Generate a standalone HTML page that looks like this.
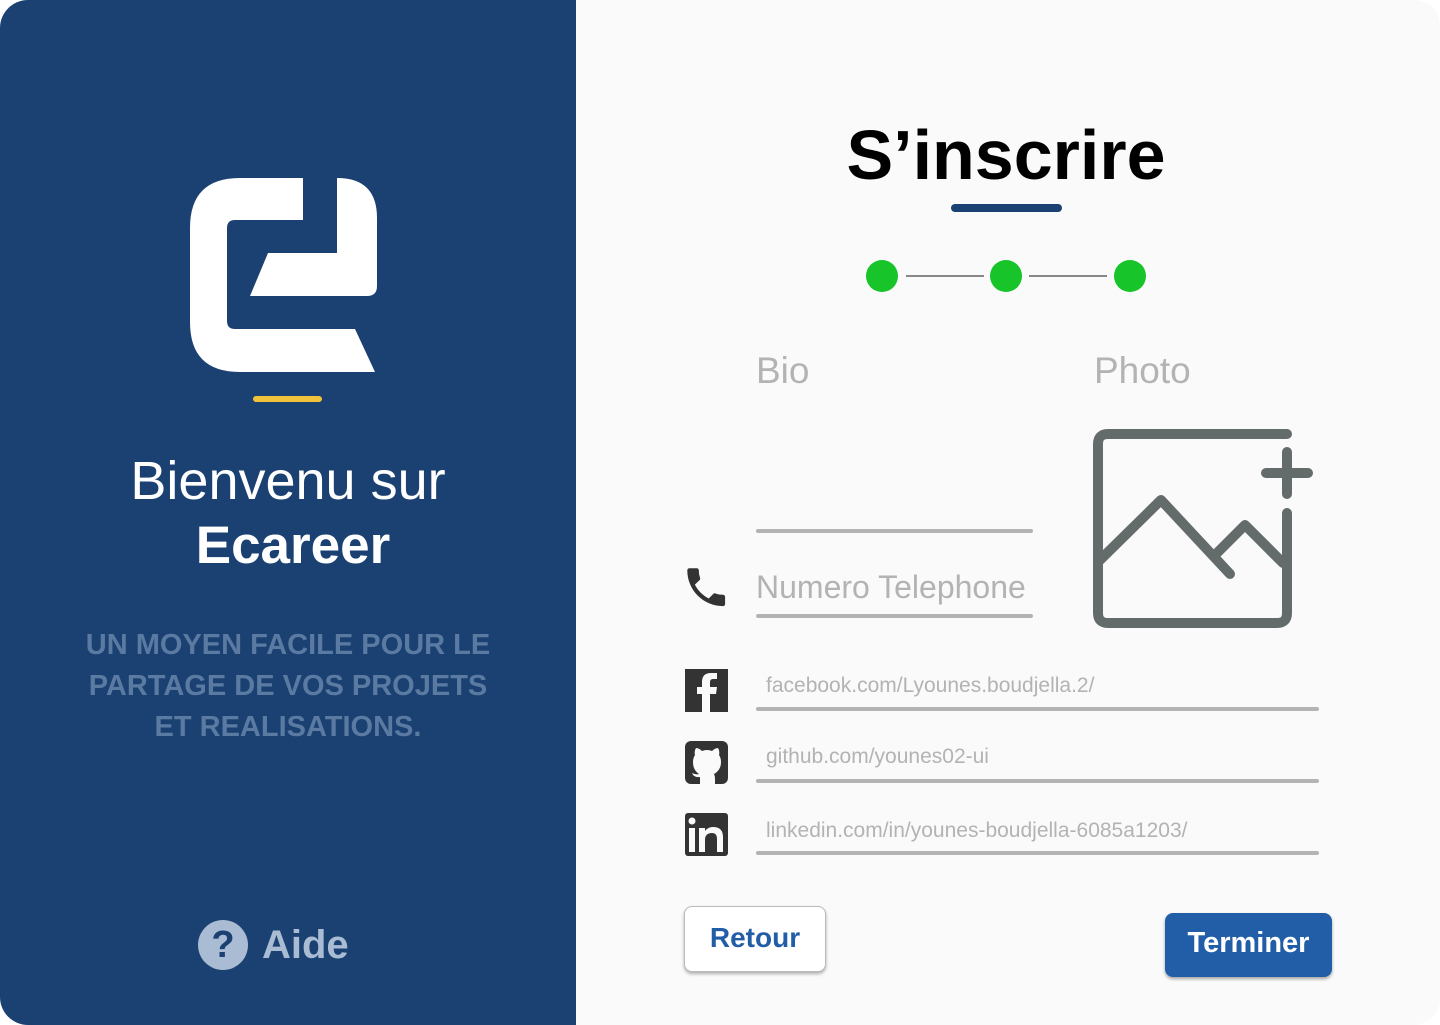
<!DOCTYPE html>
<html><head><meta charset="utf-8"><style>
*{margin:0;padding:0;box-sizing:border-box}
html,body{width:1440px;height:1025px;background:#fff;overflow:hidden;font-family:"Liberation Sans",sans-serif}
.left{position:absolute;left:0;top:0;width:576px;height:1025px;background:#1a4172;border-radius:28px 0 0 28px}
.right{position:absolute;left:576px;top:0;width:864px;height:1025px;background:#fafafa;border-radius:0 26px 26px 0}
.abs{position:absolute}
.c{text-align:center}
.line{position:absolute;height:4px;background:#b3b3b3;border-radius:2px}
.ph{position:absolute;color:#b3b3b3;font-size:21px;white-space:nowrap}
</style></head><body>
<div class="left">
<svg class="abs" style="left:0;top:0" width="576" height="420">
<path fill="#fff" d="M303,178 L303,220 L235,220 Q227,220 227,228 L227,321 Q227,329 235,329 L355,329 L375,372 L240,372 Q190,372 190,322 L190,228 Q190,178 240,178 Z"/>
<path fill="#fff" d="M337,178 Q377,178 377,218 L377,286 Q377,296 367,296 L250,296 L268,253 L337,253 Z"/>
<rect x="253" y="396" width="69" height="6" rx="3" fill="#f2c33a"/>
</svg>
<div class="abs c" style="left:0;width:576px;top:449px;color:#fff;font-size:54px;line-height:64px">Bienvenu sur</div>
<div class="abs c" style="left:0;width:586px;top:514px;color:#fff;font-size:53px;font-weight:bold;line-height:64px">Ecareer</div>
<div class="abs c" style="left:0;width:576px;top:625px;color:#5a7aa2;font-size:29px;font-weight:bold;line-height:41px">UN MOYEN FACILE POUR LE<br>PARTAGE DE VOS PROJETS<br>ET REALISATIONS.</div>
<div class="abs" style="left:198px;top:920px;width:50px;height:50px;border-radius:50%;background:#a9bcd3;color:#1a4172;font-weight:bold;font-size:38px;text-align:center;line-height:50px">?</div>
<div class="abs" style="left:262px;top:918px;color:#a9bcd3;font-size:40px;font-weight:bold;line-height:54px">Aide</div>
</div>
<div class="right">
<div class="abs c" style="left:220px;width:420px;top:112px;font-size:70px;font-weight:bold;color:#000;line-height:86px">S’inscrire</div>
<div class="abs" style="left:375px;top:204px;width:111px;height:8px;border-radius:4px;background:#1a4172"></div>
<div class="abs" style="left:290px;top:260px;width:32px;height:32px;border-radius:50%;background:#17c42a"></div>
<div class="abs" style="left:414px;top:260px;width:32px;height:32px;border-radius:50%;background:#17c42a"></div>
<div class="abs" style="left:538px;top:260px;width:32px;height:32px;border-radius:50%;background:#17c42a"></div>
<div class="abs" style="left:330px;top:275px;width:78px;height:2px;background:#888"></div>
<div class="abs" style="left:453px;top:275px;width:78px;height:2px;background:#888"></div>
<div class="abs" style="left:180px;top:350px;color:#b3b3b3;font-size:37px">Bio</div>
<div class="abs" style="left:518px;top:350px;color:#b3b3b3;font-size:37px">Photo</div>
<div class="line" style="left:180px;top:529px;width:277px"></div>
<div class="abs" style="left:180px;top:569px;color:#b3b3b3;font-size:32px">Numero Telephone</div>
<div class="line" style="left:180px;top:614px;width:277px"></div>
<div class="ph" style="left:190px;top:674px">facebook.com/Lyounes.boudjella.2/</div>
<div class="line" style="left:180px;top:707px;width:563px"></div>
<div class="ph" style="left:190px;top:745px">github.com/younes02-ui</div>
<div class="line" style="left:180px;top:779px;width:563px"></div>
<div class="ph" style="left:190px;top:819px">linkedin.com/in/younes-boudjella-6085a1203/</div>
<div class="line" style="left:180px;top:851px;width:563px"></div>
<div class="abs" style="left:108px;top:906px;width:142px;height:66px;background:#fff;border:1px solid #bbb;border-radius:8px;box-shadow:0 2px 3px rgba(0,0,0,.3);color:#225ea8;font-weight:bold;font-size:28px;text-align:center;line-height:62px">Retour</div>
<div class="abs" style="left:589px;top:913px;width:167px;height:64px;background:#225ea8;border-radius:8px;box-shadow:0 2px 3px rgba(0,0,0,.35);color:#fff;font-weight:bold;font-size:29px;text-align:center;line-height:60px">Terminer</div>
</div>
<svg class="abs" style="left:0;top:0" width="1440" height="1025">
<g fill="none" stroke="#646c6b" stroke-width="10" stroke-linecap="round" stroke-linejoin="round">
<path d="M1287,434 L1108,434 Q1098,434 1098,444 L1098,613 Q1098,623 1108,623 L1277,623 Q1287,623 1287,613 L1287,513"/>
<path d="M1287,452 L1287,494 M1266,473 L1308,473"/>
<path d="M1100,560 L1161,500 L1230,574 M1215,555 L1245,525 L1283,563"/>
</g>
<path fill="#333" transform="translate(681,562) scale(2.1)" d="M6.6 10.8c1.4 2.8 3.8 5.1 6.6 6.6l2.2-2.2c.3-.3.7-.4 1-.2 1.1.4 2.3.6 3.6.6.6 0 1 .4 1 1V20c0 .6-.4 1-1 1C10.6 21 3 13.4 3 4c0-.6.4-1 1-1h3.5c.6 0 1 .4 1 1 0 1.3.2 2.5.6 3.6.1.3 0 .7-.2 1L6.6 10.8z"/>
<rect x="685" y="669" width="43" height="43" fill="#333"/>
<path fill="#fafafa" d="M710,712 L710,694 L716,694 L717,687 L710,687 L710,682 Q710,679 713,679 L717,679 L717,673 L711,673 Q702,673 702,682 L702,687 L697,687 L697,694 L702,694 L702,712 Z"/>
<rect x="685" y="741" width="43" height="43" rx="6" fill="#333"/>
<path fill="#fafafa" d="M700,784 L700,777 Q694,778 692,773 Q696,775 699,774 Q693,770 693,762 Q693,758 695,755 Q694,751 696,748 Q699,748 702,751 Q707,749 712,751 Q715,748 718,748 Q720,751 719,755 Q721,758 721,762 Q721,770 714,774 Q715,776 715,779 L715,784 Z"/>
<rect x="685" y="813" width="43" height="43" rx="3" fill="#333"/>
<rect x="689" y="828" width="6" height="24" fill="#fafafa"/>
<circle cx="692" cy="821" r="3.5" fill="#fafafa"/>
<path fill="#fafafa" d="M699,828 L705,828 L705,831 Q708,827 713,827 Q723,827 723,837 L723,852 L717,852 L717,839 Q717,833 712,833 Q705,833 705,840 L705,852 L699,852 Z"/>
</svg>
</body></html>
